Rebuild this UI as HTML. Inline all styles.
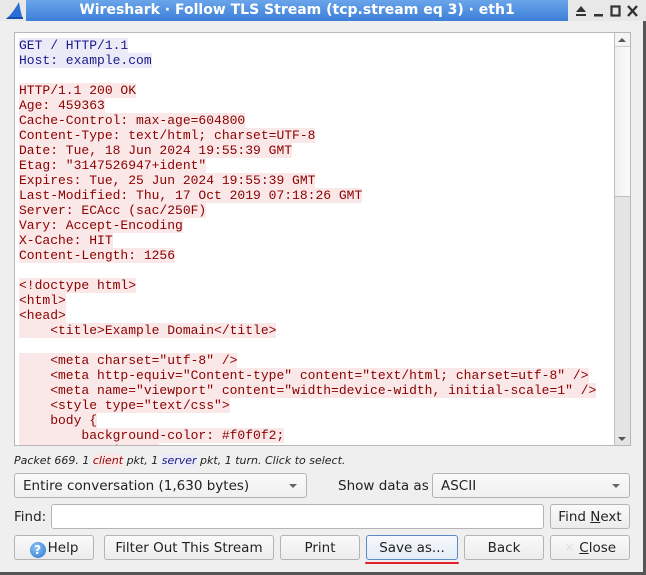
<!DOCTYPE html>
<html><head><style>
*{box-sizing:border-box;margin:0;padding:0}
body{width:646px;height:575px;background:#efefef;font-family:"DejaVu Sans","Liberation Sans",sans-serif;font-size:13px;color:#222;position:relative;overflow:hidden}
.abs{position:absolute}
#tb{left:0;top:0;width:646px;height:21px;background:#e8e8e8}
#blue{left:26px;top:0;width:542px;height:21px;background:linear-gradient(#6aa5ea,#3d7fd8)}
#title{left:26px;width:542px;top:2px;text-align:center;color:#fff;font-weight:bold;font-size:14px}
#text{left:14px;top:32px;width:617px;height:414px;background:#fff;border:1px solid #b8b8b8;overflow:hidden}
.ln{position:absolute;left:4px;height:15px;line-height:15px;font-family:"Liberation Mono",monospace;font-size:13px;white-space:pre;color:#8b0000;background:#fae8e8}
.c{color:#1a1a8c;background:#ebebf8}
#sb{left:614px;top:33px;width:16px;height:412px;background:#e4e4e4;border-left:1px solid #c0c0c0}
.btn{position:absolute;height:25px;border:1px solid #b4b4b4;border-radius:3px;background:linear-gradient(#fafafa,#ececec);text-align:center;line-height:24px;font-size:13.5px}
.combo{position:absolute;height:25px;border:1px solid #b4b4b4;border-radius:3px;background:linear-gradient(#fafafa,#f0f0f0);line-height:24px;padding-left:8px;font-size:13.5px}
.arr{position:absolute;right:9px;top:10px;width:0;height:0;border-left:4px solid transparent;border-right:4px solid transparent;border-top:4px solid #666}
</style></head><body>
<div id="tb" class="abs"></div>
<div id="blue" class="abs"></div>
<svg class="abs" style="left:4px;top:1px" width="20" height="19"><path d="M2 18 C8 13 12 6 15 1 C16 7 17 13 19 18 Z" fill="#2a6fd6"/><path d="M2 18 L19 18 L19 16 L4 16Z" fill="#1b4ea8"/></svg>
<div id="title" class="abs">Wireshark · Follow TLS Stream (tcp.stream eq 3) · eth1</div>
<svg class="abs" style="left:574px;top:4px" width="70" height="14">
<path d="M2 8 L7 2 L12 8Z" fill="#333"/><rect x="2" y="10" width="10" height="2" fill="#333"/>
<rect x="20" y="10" width="9" height="2.5" fill="#333"/>
<rect x="37.5" y="2.5" width="8" height="9" fill="none" stroke="#333" stroke-width="2.2"/>
<path d="M54 2 L63 12 M63 2 L54 12" stroke="#333" stroke-width="2.4"/></svg>
<div class="abs" style="left:643px;top:21px;width:3px;height:554px;background:#555"></div>
<div class="abs" style="left:0;top:572px;width:646px;height:3px;background:#555"></div>

<div id="text" class="abs">
<div class="ln c" style="top:5px">GET / HTTP/1.1</div>
<div class="ln c" style="top:20px">Host: example.com</div>
<div class="ln" style="top:50px">HTTP/1.1 200 OK</div>
<div class="ln" style="top:65px">Age: 459363</div>
<div class="ln" style="top:80px">Cache-Control: max-age=604800</div>
<div class="ln" style="top:95px">Content-Type: text/html; charset=UTF-8</div>
<div class="ln" style="top:110px">Date: Tue, 18 Jun 2024 19:55:39 GMT</div>
<div class="ln" style="top:125px">Etag: "3147526947+ident"</div>
<div class="ln" style="top:140px">Expires: Tue, 25 Jun 2024 19:55:39 GMT</div>
<div class="ln" style="top:155px">Last-Modified: Thu, 17 Oct 2019 07:18:26 GMT</div>
<div class="ln" style="top:170px">Server: ECAcc (sac/250F)</div>
<div class="ln" style="top:185px">Vary: Accept-Encoding</div>
<div class="ln" style="top:200px">X-Cache: HIT</div>
<div class="ln" style="top:215px">Content-Length: 1256</div>
<div class="ln" style="top:245px">&lt;!doctype html&gt;</div>
<div class="ln" style="top:260px">&lt;html&gt;</div>
<div class="ln" style="top:275px">&lt;head&gt;</div>
<div class="ln" style="top:290px">    &lt;title&gt;Example Domain&lt;/title&gt;</div>
<div class="ln" style="top:320px">    &lt;meta charset="utf-8" /&gt;</div>
<div class="ln" style="top:335px">    &lt;meta http-equiv="Content-type" content="text/html; charset=utf-8" /&gt;</div>
<div class="ln" style="top:350px">    &lt;meta name="viewport" content="width=device-width, initial-scale=1" /&gt;</div>
<div class="ln" style="top:365px">    &lt;style type="text/css"&gt;</div>
<div class="ln" style="top:380px">    body {</div>
<div class="ln" style="top:395px">        background-color: #f0f0f2;</div>
<div class="ln" style="top:410px">        margin: 0;</div>
</div>
<div id="sb" class="abs"></div>
<div class="abs" style="left:615px;top:33px;width:15px;height:14px;background:#f4f4f4;border-bottom:1px solid #ccc"></div>
<div class="abs" style="left:618px;top:38px;border-left:4px solid transparent;border-right:4px solid transparent;border-bottom:4px solid #555"></div>
<div class="abs" style="left:615px;top:47px;width:15px;height:150px;background:linear-gradient(90deg,#f0f0f0,#fafafa);border-bottom:1px solid #c0c0c0"></div>
<div class="abs" style="left:618px;top:437px;border-left:4px solid transparent;border-right:4px solid transparent;border-top:4px solid #555"></div>

<div class="abs" style="left:14px;top:454px;font-size:11px;font-style:italic">Packet 669. 1 <span style="color:#8b0000;background:#fae8e8">client</span> pkt, 1 <span style="color:#1a1a8c;background:#ebebf8">server</span> pkt, 1 turn. Click to select.</div>

<div class="combo" style="left:14px;top:473px;width:293px">Entire conversation (1,630 bytes)<div class="arr"></div></div>
<div class="abs" style="left:338px;top:478px;font-size:13.5px">Show data as</div>
<div class="combo" style="left:432px;top:473px;width:198px">ASCII<div class="arr"></div></div>

<div class="abs" style="left:14px;top:509px;font-size:13.5px">Find:</div>
<div class="abs" style="left:51px;top:504px;width:493px;height:25px;background:#fff;border:1px solid #b4b4b4;border-radius:3px"></div>
<div class="btn" style="left:550px;top:504px;width:80px">Find <u>N</u>ext</div>

<div class="btn" style="left:14px;top:535px;width:80px"><span style="display:inline-block;width:16px;height:16px;border-radius:50%;background:radial-gradient(circle at 40% 35%,#8cc4f8,#2a74d0);color:#fff;font-size:12px;line-height:16px;font-weight:bold;vertical-align:-2px;margin-right:2px">?</span>Help</div>
<div class="btn" style="left:104px;top:535px;width:170px">Filter Out This Stream</div>
<div class="btn" style="left:280px;top:535px;width:80px">Print</div>
<div class="btn" style="left:366px;top:535px;width:92px;border-color:#5a8ac8;background:linear-gradient(#f6f9fd,#e4ecf6)">Save as...</div>
<div class="btn" style="left:464px;top:535px;width:80px">Back</div>
<div class="btn" style="left:550px;top:535px;width:80px"><span style="color:#e4e4e4;margin-right:4px">✕</span><u>C</u>lose</div>
<div class="abs" style="left:365px;top:562px;width:94px;height:2px;background:#e0202a;border-radius:1px"></div>
</body></html>
